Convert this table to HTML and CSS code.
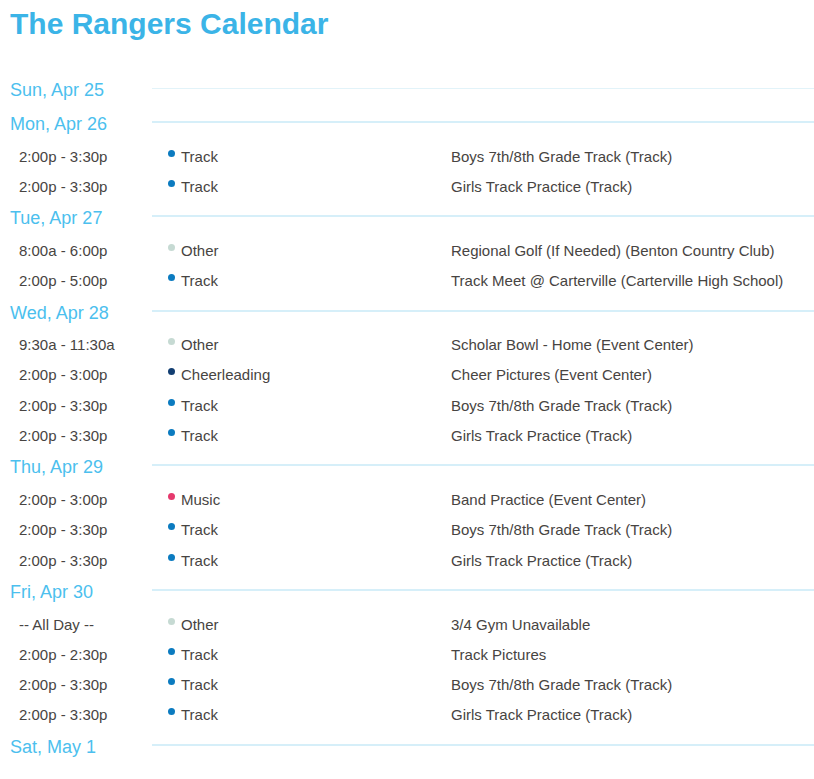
FILE: index.html
```html
<!DOCTYPE html>
<html>
<head>
<meta charset="utf-8">
<link rel="stylesheet" href="styles.css">
</head>
<body>
<h1 class="title">The Rangers Calendar</h1>
<div class="calendar">
  <div class="day">
    <div class="day-head first"><span class="date">Sun, Apr 25</span><span class="rule"></span></div>
  </div>
  <div class="day">
    <div class="day-head"><span class="date">Mon, Apr 26</span><span class="rule"></span></div>
    <div class="event"><span class="time">2:00p - 3:30p</span><span class="cat"><i class="dot track"></i>Track</span><span class="desc">Boys 7th/8th Grade Track (Track)</span></div>
    <div class="event"><span class="time">2:00p - 3:30p</span><span class="cat"><i class="dot track"></i>Track</span><span class="desc">Girls Track Practice (Track)</span></div>
  </div>
  <div class="day">
    <div class="day-head"><span class="date">Tue, Apr 27</span><span class="rule"></span></div>
    <div class="event"><span class="time">8:00a - 6:00p</span><span class="cat"><i class="dot other"></i>Other</span><span class="desc">Regional Golf (If Needed) (Benton Country Club)</span></div>
    <div class="event"><span class="time">2:00p - 5:00p</span><span class="cat"><i class="dot track"></i>Track</span><span class="desc">Track Meet @ Carterville (Carterville High School)</span></div>
  </div>
  <div class="day">
    <div class="day-head"><span class="date">Wed, Apr 28</span><span class="rule"></span></div>
    <div class="event"><span class="time">9:30a - 11:30a</span><span class="cat"><i class="dot other"></i>Other</span><span class="desc">Scholar Bowl - Home (Event Center)</span></div>
    <div class="event"><span class="time">2:00p - 3:00p</span><span class="cat"><i class="dot cheer"></i>Cheerleading</span><span class="desc">Cheer Pictures (Event Center)</span></div>
    <div class="event"><span class="time">2:00p - 3:30p</span><span class="cat"><i class="dot track"></i>Track</span><span class="desc">Boys 7th/8th Grade Track (Track)</span></div>
    <div class="event"><span class="time">2:00p - 3:30p</span><span class="cat"><i class="dot track"></i>Track</span><span class="desc">Girls Track Practice (Track)</span></div>
  </div>
  <div class="day">
    <div class="day-head"><span class="date">Thu, Apr 29</span><span class="rule"></span></div>
    <div class="event"><span class="time">2:00p - 3:00p</span><span class="cat"><i class="dot music"></i>Music</span><span class="desc">Band Practice (Event Center)</span></div>
    <div class="event"><span class="time">2:00p - 3:30p</span><span class="cat"><i class="dot track"></i>Track</span><span class="desc">Boys 7th/8th Grade Track (Track)</span></div>
    <div class="event"><span class="time">2:00p - 3:30p</span><span class="cat"><i class="dot track"></i>Track</span><span class="desc">Girls Track Practice (Track)</span></div>
  </div>
  <div class="day">
    <div class="day-head"><span class="date">Fri, Apr 30</span><span class="rule"></span></div>
    <div class="event"><span class="time">-- All Day --</span><span class="cat"><i class="dot other"></i>Other</span><span class="desc">3/4 Gym Unavailable</span></div>
    <div class="event"><span class="time">2:00p - 2:30p</span><span class="cat"><i class="dot track"></i>Track</span><span class="desc">Track Pictures</span></div>
    <div class="event"><span class="time">2:00p - 3:30p</span><span class="cat"><i class="dot track"></i>Track</span><span class="desc">Boys 7th/8th Grade Track (Track)</span></div>
    <div class="event"><span class="time">2:00p - 3:30p</span><span class="cat"><i class="dot track"></i>Track</span><span class="desc">Girls Track Practice (Track)</span></div>
  </div>
  <div class="day">
    <div class="day-head"><span class="date">Sat, May 1</span><span class="rule"></span></div>
  </div>
</div>
</body>
</html>
```
FILE: styles.css
```css
html, body {
  margin: 0;
  padding: 0;
  background: #ffffff;
}
body {
  font-family: "Liberation Sans", Arial, sans-serif;
  color: #474442;
}
.title {
  margin: 0;
  padding: 6px 0 0 10px;
  height: 73.5px;
  box-sizing: border-box;
  font-size: 30px;
  line-height: 36px;
  font-weight: bold;
  color: #3bb4e7;
}
.calendar {
  display: flex;
  flex-direction: column;
}
.day-head {
  display: flex;
  align-items: center;
  height: 33.7px;
}
.date {
  width: 142px;
  padding-left: 10px;
  font-size: 18px;
  color: #4cbfee;
  line-height: 22px;
  flex: none;
}
.rule {
  flex: 1;
  height: 2px;
  background: #d6eff9;
  margin-top: -4px;
}
.day-head.first .rule {
  height: 1px;
  background: #e2f3f9;
}
.event {
  display: grid;
  grid-template-columns: 165px 286px 1fr;
  height: 30.3px;
  align-items: center;
  font-size: 15px;
}
.time {
  padding-left: 19px;
}
.cat {
  display: flex;
  align-items: center;
  padding-left: 3px;
}
.dot {
  width: 7px;
  height: 7px;
  border-radius: 50%;
  margin-right: 6px;
  position: relative;
  top: -3px;
  flex: none;
}
.dot.track { background: #0b7bc0; }
.dot.other { background: #c6dad3; }
.dot.cheer { background: #123e72; }
.dot.music { background: #e5396d; }
```
